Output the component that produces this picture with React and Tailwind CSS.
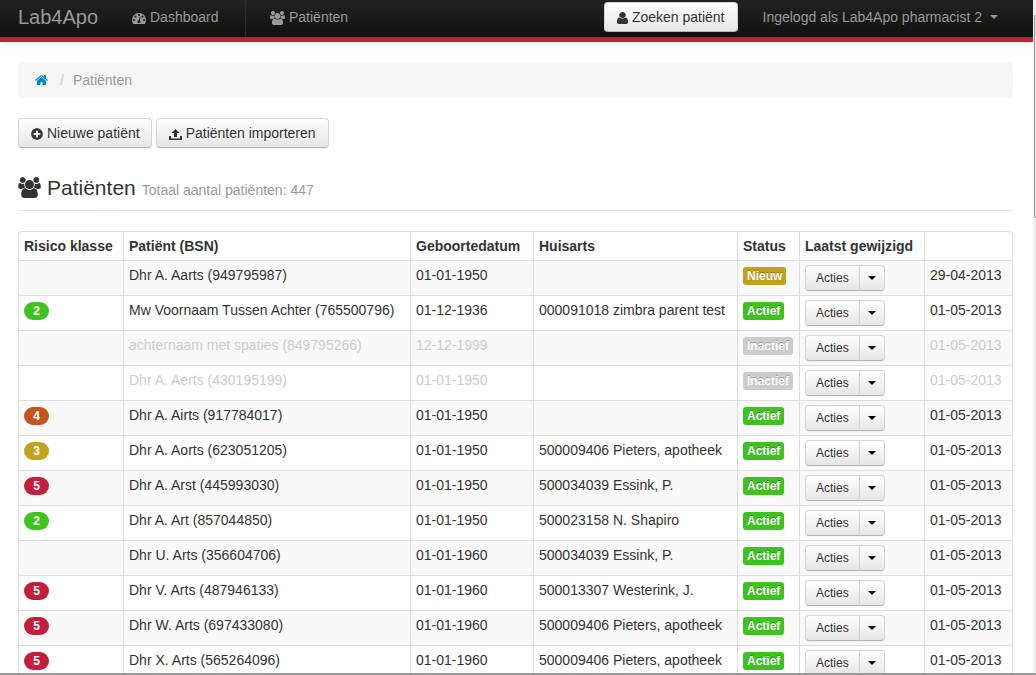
import { FaPlusCircle } from 'react-icons/fa';

const patients = [
  { risk: '', name: 'Dhr A. Aarts (949795987)', born: '01-01-1950', gp: '', status: 'Nieuw', changed: '29-04-2013' },
  { risk: '2', name: 'Mw Voornaam Tussen Achter (765500796)', born: '01-12-1936', gp: '000091018 zimbra parent test', status: 'Actief', changed: '01-05-2013' },
  { risk: '', name: 'achternaam met spaties (849795266)', born: '12-12-1999', gp: '', status: 'Inactief', changed: '01-05-2013' },
  { risk: '', name: 'Dhr A. Aerts (430195199)', born: '01-01-1950', gp: '', status: 'Inactief', changed: '01-05-2013' },
  { risk: '4', name: 'Dhr A. Airts (917784017)', born: '01-01-1950', gp: '', status: 'Actief', changed: '01-05-2013' },
  { risk: '3', name: 'Dhr A. Aorts (623051205)', born: '01-01-1950', gp: '500009406 Pieters, apotheek', status: 'Actief', changed: '01-05-2013' },
  { risk: '5', name: 'Dhr A. Arst (445993030)', born: '01-01-1950', gp: '500034039 Essink, P.', status: 'Actief', changed: '01-05-2013' },
  { risk: '2', name: 'Dhr A. Art (857044850)', born: '01-01-1950', gp: '500023158 N. Shapiro', status: 'Actief', changed: '01-05-2013' },
  { risk: '', name: 'Dhr U. Arts (356604706)', born: '01-01-1960', gp: '500034039 Essink, P.', status: 'Actief', changed: '01-05-2013' },
  { risk: '5', name: 'Dhr V. Arts (487946133)', born: '01-01-1960', gp: '500013307 Westerink, J.', status: 'Actief', changed: '01-05-2013' },
  { risk: '5', name: 'Dhr W. Arts (697433080)', born: '01-01-1960', gp: '500009406 Pieters, apotheek', status: 'Actief', changed: '01-05-2013' },
  { risk: '5', name: 'Dhr X. Arts (565264096)', born: '01-01-1960', gp: '500009406 Pieters, apotheek', status: 'Actief', changed: '01-05-2013' },
];

const riskColors = {
  2: 'bg-[#3dc220]',
  3: 'bg-[#c2a120]',
  4: 'bg-[#c25520]',
  5: 'bg-[#c41e3d]',
};

const statusColors = {
  Nieuw: 'bg-[#c2a120]',
  Actief: 'bg-[#3dc220]',
  Inactief: 'bg-[#cccccc]',
};

const buttonStyle =
  'border border-[#d4d4d4] border-b-[#b3b3b3] bg-linear-to-b from-white to-[#e6e6e6] text-[#333333] shadow-[0_1px_2px_rgba(0,0,0,0.05)] hover:to-white';

function GroupIcon({ className }) {
  return (
    <svg viewBox="0 0 1920 1792" fill="currentColor" className={className} aria-hidden="true">
      <path d="M593 896q-162 5-265 128h-134q-82 0-138-40.500t-56-118.500q0-353 124-353 6 0 43.500 21t97.500 42.500 119 21.500q67 0 133-23-5 37-5 66 0 139 81 256zm1071 637q0 120-73 189.500t-194 69.500h-874q-121 0-194-69.500t-73-189.500q0-53 3.500-103.500t14-109 26.500-108.500 43-97.500 62-81 85.500-53.500 111.500-20q10 0 43 21.500t73 48 107 48 135 21.500 135-21.500 107-48 73-48 43-21.500q61 0 111.500 20t85.500 53.500 62 81 43 97.500 26.500 108.500 14 109 3.500 103.500zm-1024-1277q0 106-75 181t-181 75-181-75-75-181 75-181 181-75 181 75 75 181zm704 384q0 159-112.500 271.500t-271.500 112.500-271.500-112.500-112.500-271.500 112.500-271.500 271.500-112.500 271.500 112.500 112.500 271.500zm576 225q0 78-56 118.500t-138 40.500h-134q-103-123-265-128 81-117 81-256 0-29-5-66 66 23 133 23 59 0 119-21.500t97.500-42.500 43.500-21q124 0 124 353zm-128-609q0 106-75 181t-181 75-181-75-75-181 75-181 181-75 181 75 75 181z" />
    </svg>
  );
}

function DashboardIcon({ className }) {
  return (
    <svg viewBox="0 128 1792 1536" fill="currentColor" className={className} aria-hidden="true">
      <path d="M384 1152q0-53-37.500-90.500t-90.500-37.500-90.500 37.500-37.500 90.500 37.500 90.500 90.500 37.500 90.500-37.500 37.500-90.500zm192-448q0-53-37.500-90.500t-90.500-37.500-90.500 37.500-37.500 90.500 37.500 90.500 90.500 37.500 90.500-37.500 37.500-90.500zm428 481l101-382q6-26-7.500-48.500t-38.500-29.500-48 6.500-30 39.500l-101 382q-60 5-107 43.500t-63 98.500q-20 77 20 146t117 89 146-20 89-117q16-60-6-117t-72-91zm660-33q0-53-37.500-90.500t-90.500-37.500-90.500 37.500-37.500 90.500 37.500 90.500 90.500 37.500 90.500-37.500 37.500-90.500zm-640-640q0-53-37.500-90.500t-90.500-37.500-90.500 37.500-37.500 90.500 37.500 90.500 90.500 37.500 90.500-37.500 37.500-90.500zm448 192q0-53-37.500-90.500t-90.500-37.500-90.500 37.500-37.500 90.500 37.500 90.500 90.500 37.500 90.500-37.500 37.500-90.500zm320 448q0 261-141 483-19 29-54 29h-1402q-35 0-54-29-141-221-141-483 0-182 71-348t191-286 286-191 348-71 348 71 286 191 191 286 71 348z" />
    </svg>
  );
}

function HomeIcon({ className }) {
  return (
    <svg viewBox="64 192 1664 1408" fill="currentColor" className={className} aria-hidden="true">
      <path d="M1472 992v480q0 26-19 45t-45 19h-384v-384h-256v384h-384q-26 0-45-19t-19-45v-480q0-1 .5-3t.5-3l575-474 575 474q1 2 1 6zm223-69l-62 74q-8 9-21 11h-3q-13 0-21-7l-692-577-692 577q-12 8-24 7-13-2-21-11l-62-74q-8-10-7-23.500t11-21.500l719-599q32-26 76-26t76 26l244 204v-195q0-14 9-23t23-9h192q14 0 23 9t9 23v408l219 182q10 8 11 21.500t-7 23.500z" />
    </svg>
  );
}

function UserIcon({ className }) {
  return (
    <svg viewBox="256 128 1280 1536" preserveAspectRatio="none" fill="currentColor" className={className} aria-hidden="true">
      <path d="M1536 1399q0 109-62.500 187t-150.500 78h-854q-88 0-150.500-78t-62.500-187q0-85 8.500-160.500t31.500-152 58.500-131 94-89 134.500-34.500q131 128 313 128t313-128q76 0 134.500 34.500t94 89 58.500 131 31.500 152 8.500 160.500zm-256-887q0 159-112.500 271.500t-271.500 112.500-271.500-112.500-112.500-271.500 112.500-271.500 271.500-112.500 271.500 112.500 112.500 271.500z" />
    </svg>
  );
}

function UploadIcon({ className }) {
  return (
    <svg viewBox="0 0 13 12" fill="currentColor" className={className} aria-hidden="true">
      <path d="M6.500 1L10.500 5H8V9H5V5H2.500ZM0 8H2V10.500H11V8H13V12H0Z" />
    </svg>
  );
}

function Caret({ className }) {
  return (
    <svg viewBox="0 0 8 4" fill="currentColor" className={className} aria-hidden="true">
      <path d="M0 0H8L4 4Z" />
    </svg>
  );
}

function Navbar() {
  return (
    <header className="flex h-[42px] items-stretch justify-between border-b-[5px] border-[#c41e3d] bg-linear-to-b from-[#222222] to-[#111111] pl-[18px] text-[#999999] shadow-[0_1px_10px_rgba(0,0,0,0.1)]">
      <nav className="flex items-stretch">
        <a href="#" className="flex w-[99px] items-center pb-1 text-xl leading-5 hover:text-white">Lab4Apo</a>
        <a href="#dashboard" className="flex w-[129px] items-center gap-1 border-r border-[#2b2b2b] pb-[3px] pl-[15px] hover:text-white">
          <DashboardIcon className="mt-[2px] h-3 w-[14px]" />
          Dashboard
        </a>
        <a href="#patienten" className="flex items-center gap-1 pb-[3px] pl-6 hover:text-white">
          <GroupIcon className="mt-[2px] h-[14px] w-[15px]" />
          Patiënten
        </a>
      </nav>
      <div className="flex items-center pb-[3px]">
        <button type="button" className={`${buttonStyle} flex h-[30px] items-center gap-1 rounded px-3`}>
          <UserIcon className="mt-[2px] h-3 w-[11px]" />
          Zoeken patiënt
        </button>
        <button type="button" className="flex items-center gap-2 pr-[35px] pl-[25px] hover:text-white">
          Ingelogd als Lab4Apo pharmacist 2
          <Caret className="h-1 w-2" />
        </button>
      </div>
    </header>
  );
}

function ActionButtons() {
  return (
    <div className="flex">
      <button type="button" className={`${buttonStyle} h-[26px] rounded-l px-[10px] text-xs`}>Acties</button>
      <button type="button" aria-label="Meer acties" className={`${buttonStyle} -ml-px flex h-[26px] w-[26px] items-center justify-center rounded-r`}>
        <Caret className="h-1 w-2 text-black" />
      </button>
    </div>
  );
}

function PatientTable() {
  const cell = 'border-t border-l border-[#dddddd] px-[5px] align-top';
  return (
    <table className="w-full table-fixed border-separate border-spacing-0 rounded-t border-r border-[#dddddd] text-left">
      <colgroup>
        <col className="w-[105px]" />
        <col />
        <col className="w-[123px]" />
        <col className="w-[204px]" />
        <col className="w-[62px]" />
        <col className="w-[125px]" />
        <col className="w-[88px]" />
      </colgroup>
      <thead>
        <tr className="h-[29px] whitespace-nowrap">
          <th className={`${cell} rounded-tl pt-1`}>Risico klasse</th>
          <th className={`${cell} pt-1`}>Patiënt (BSN)</th>
          <th className={`${cell} pt-1`}>Geboortedatum</th>
          <th className={`${cell} pt-1`}>Huisarts</th>
          <th className={`${cell} pt-1`}>Status</th>
          <th className={`${cell} pt-1`}>Laatst gewijzigd</th>
          <th className={`${cell} rounded-tr pt-1`} aria-label="Datum"></th>
        </tr>
      </thead>
      <tbody>
        {patients.map((p) => (
          <tr
            key={p.name}
            className={`h-[35px] whitespace-nowrap odd:bg-[#f9f9f9] ${p.status === 'Inactief' ? 'text-[#cccccc]' : ''}`}
          >
            <td className={`${cell} pt-[6px]`}>
              {p.risk && (
                <span className={`${riskColors[p.risk]} flex h-[18px] w-[25px] items-center justify-center rounded-full text-xs font-bold text-white`}>
                  {p.risk}
                </span>
              )}
            </td>
            <td className={`${cell} pt-1`}>{p.name}</td>
            <td className={`${cell} pt-1`}>{p.born}</td>
            <td className={`${cell} pt-1`}>{p.gp}</td>
            <td className={`${cell} pt-[6px]`}>
              <span className={`${statusColors[p.status]} flex h-[18px] w-fit items-center rounded-[3px] px-1 text-xs font-bold text-white [text-shadow:0_-1px_0_rgba(0,0,0,0.25)]`}>
                {p.status}
              </span>
            </td>
            <td className={`${cell} pt-1`}>
              <ActionButtons />
            </td>
            <td className={`${cell} pt-1`}>{p.changed}</td>
          </tr>
        ))}
      </tbody>
    </table>
  );
}

export default function App() {
  return (
    <div className="flex h-screen flex-col overflow-hidden bg-white font-['Liberation_Sans',Arial,sans-serif] text-sm text-[#333333]">
      <div className="flex min-h-0 flex-1">
        <div className="min-w-0 flex-1 overflow-hidden">
          <Navbar />
          <main className="pt-5 pr-5 pl-[18px]">
            <nav className="flex h-9 items-center rounded bg-[#f5f5f5] px-[17px]" aria-label="Kruimelpad">
              <a href="#" aria-label="Home" className="text-[#0088cc]">
                <HomeIcon className="h-3 w-[13px]" />
              </a>
              <span className="pr-[9px] pl-3 text-[#cccccc]">/</span>
              <span className="text-[#999999]">Patiënten</span>
            </nav>

            <div className="mt-5 flex gap-1">
              <button type="button" className={`${buttonStyle} flex h-[30px] items-center gap-1 rounded pr-[11px] pl-3`}>
                <FaPlusCircle className="mt-[2px] size-3" />
                Nieuwe patiënt
              </button>
              <button type="button" className={`${buttonStyle} flex h-[30px] items-center gap-1 rounded px-3`}>
                <UploadIcon className="mt-[2px] h-3 w-[13px]" />
                Patiënten importeren
              </button>
            </div>

            <div className="mt-5 mb-5 flex h-[43px] items-center border-b border-[#e5e5e5] pb-[3px]">
              <GroupIcon className="h-[21px] w-[23px]" />
              <h1 className="ml-[6px] text-[21px] leading-10">Patiënten</h1>
              <small className="mt-1 ml-[6px] text-sm text-[#999999]">Totaal aantal patiënten: 447</small>
            </div>

            <PatientTable />
          </main>
        </div>
        {/* scroll track with its thumb */}
        <div className="flex w-[3px] flex-col bg-[#f0f0f0] pt-[15px]">
          <div className="ml-px h-[203px] rounded-l-xs border-y border-l border-[#979797] bg-[#e8e8e8]"></div>
        </div>
      </div>
      <div className="h-[2px] shrink-0 bg-[#999999]"></div>
    </div>
  );
}
